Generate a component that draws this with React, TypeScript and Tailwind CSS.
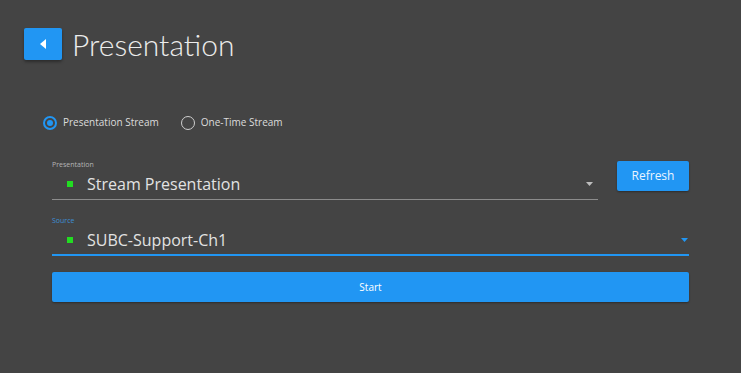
import React from 'react';

function Caret({ color }: { color: string }) {
  return (
    <svg width="7" height="4" viewBox="0 0 7 4" className="shrink-0">
      <path d="M0 0 L7 0 L3.5 4 Z" fill={color} />
    </svg>
  );
}

function Radio({ checked, label }: { checked: boolean; label: string }) {
  return (
    <label className="flex items-center gap-[6px]">
      {checked ? (
        <span className="flex h-[14px] w-[14px] items-center justify-center rounded-full border-2 border-[#2196f3]">
          <span className="h-[6px] w-[6px] rounded-full bg-[#2196f3]" />
        </span>
      ) : (
        <span className="h-[14px] w-[14px] rounded-full border border-[#cfcfcf]" />
      )}
      <span className="text-[10px] text-[#dcdcdc]">{label}</span>
    </label>
  );
}

export default function App() {
  return (
    <main className="h-[373px] w-[741px] bg-[#444444] pl-6 pt-[27px] font-['Open_Sans',sans-serif]">
      <div className="flex h-[33px] items-center gap-[10px]">
        <button className="flex h-[32px] w-[38px] items-center justify-center rounded-[2px] bg-[#2196f3] shadow-[0_2px_3px_rgba(0,0,0,0.35)]">
          <svg width="6" height="10" viewBox="0 0 6 10">
            <path d="M6 0 L6 10 L0 5 Z" fill="#ffffff" />
          </svg>
        </button>
        <h1 className="font-['Lato',sans-serif] text-[30px] font-light leading-none text-[#ececec]">Presentation</h1>
      </div>

      <div className="ml-[19px] mt-[55px] flex items-center gap-[22px]">
        <Radio checked label="Presentation Stream" />
        <Radio checked={false} label="One-Time Stream" />
      </div>

      <div className="ml-[28px] mt-[30px] w-[637px]">
        <div className="flex items-start gap-[19px]">
          <div className="flex-1">
            <div className="text-[7px] leading-[9px] text-[#b5b5b5]">Presentation</div>
            <div className="flex h-[31px] items-center border-b border-[#8c8c8c] pl-[15px] pr-[5px]">
              <span className="h-[6px] w-[6px] bg-[#22dd22]" />
              <span className="ml-[14px] flex-1 text-[16px] text-[#e2e2e2]">Stream Presentation</span>
              <Caret color="#bdbdbd" />
            </div>
          </div>
          <button className="mt-[1px] h-[30px] w-[72px] rounded-[2px] bg-[#2196f3] text-[12px] text-[#eaf4ff] shadow-[0_1px_2px_rgba(0,0,0,0.35)]">
            Refresh
          </button>
        </div>

        <div className="mt-[16px]">
          <div className="text-[7px] leading-[9px] text-[#3d8fd6]">Source</div>
          <div className="flex h-[31px] items-center border-b-2 border-[#2196f3] pl-[15px] pr-[1px]">
            <span className="h-[6px] w-[6px] bg-[#22dd22]" />
            <span className="ml-[14px] flex-1 text-[16px] text-[#e2e2e2]">SUBC-Support-Ch1</span>
            <Caret color="#2196f3" />
          </div>
        </div>

        <button className="mt-[16px] h-[30px] w-full rounded-[2px] bg-[#2196f3] text-[10px] text-white shadow-[0_1px_2px_rgba(0,0,0,0.35)]">
          Start
        </button>
      </div>
    </main>
  );
}
